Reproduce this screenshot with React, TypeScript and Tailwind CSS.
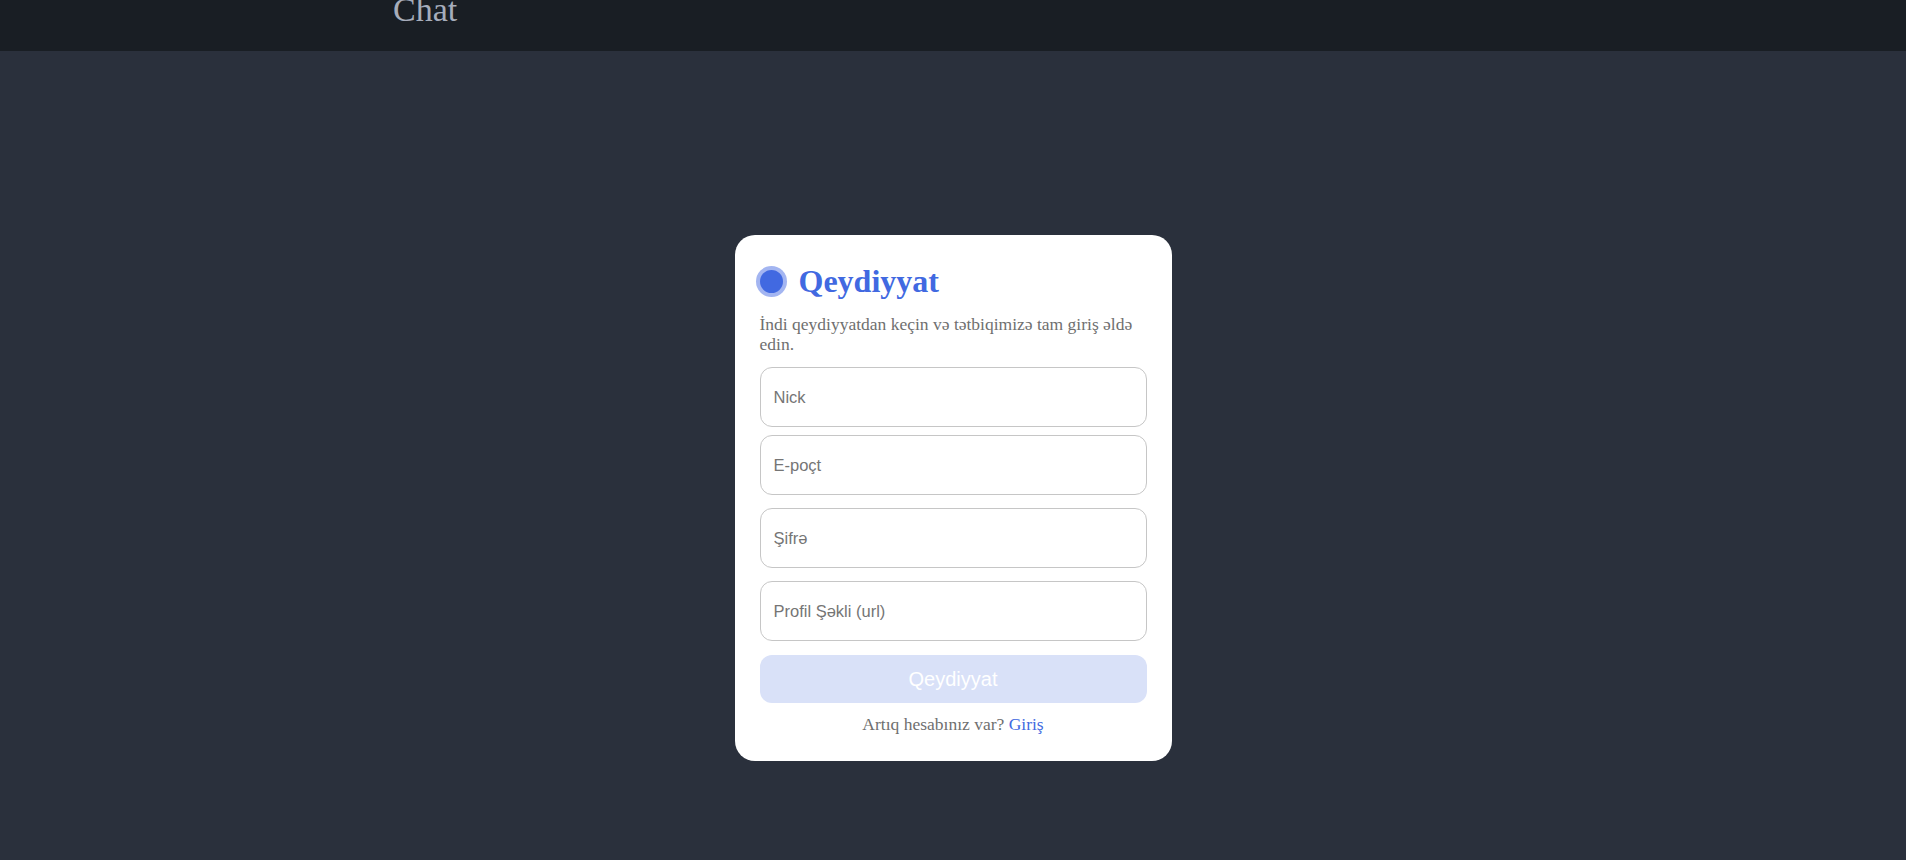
import React from "react";

const serif = "font-['Liberation_Serif','Times_New_Roman',serif]";
const sans = "font-['Liberation_Sans',Arial,sans-serif]";

const FIELDS = [
  { placeholder: "Nick", type: "text", gap: "mt-[13px]" },
  { placeholder: "E-poçt", type: "email", gap: "mt-2" },
  { placeholder: "Şifrə", type: "password", gap: "mt-[13px]" },
  { placeholder: "Profil Şəkli (url)", type: "text", gap: "mt-[13px]" }
];

export default function App() {
  return (
    <div className="min-h-screen bg-[#2a303c]">
      <header className="h-[51px] overflow-hidden bg-[#191e24]">
        <div className="mx-auto max-w-[1120px]">
          <h1 className={`${serif} mt-[-7px] text-[34px] font-normal leading-none text-[#a6adbb]`}>Chat</h1>
        </div>
      </header>

      <main className="flex justify-center pt-[184px]">
        <div className="w-[437px] rounded-[20px] bg-white px-[25px] pb-[24px] pt-[30px]">
          <div className="flex items-center gap-[16px]">
            <span className="h-[23px] w-[23px] rounded-full bg-[#4169e1] ring-4 ring-[#a3b5f1]" />
            <h2 className={`${serif} text-[32px] font-bold leading-none text-[#4169e1]`}>Qeydiyyat</h2>
          </div>

          <p className={`${serif} mt-[17px] text-[17.5px] leading-5 text-[#6f6f6f]`}>
            İndi qeydiyyatdan keçin və tətbiqimizə tam giriş əldə edin.
          </p>

          <form className="flex flex-col" onSubmit={(e) => e.preventDefault()}>
            {FIELDS.map((field) => (
              <input
                key={field.placeholder}
                type={field.type}
                placeholder={field.placeholder}
                className={`${sans} ${field.gap} h-[60px] w-full rounded-xl border border-[#c6c6c6] bg-white px-[13px] text-[16.5px] text-[#333] outline-none placeholder:text-[#757575]`}
              />
            ))}
            <button
              type="submit"
              disabled
              className={`${sans} mt-[14px] h-[48px] w-full rounded-xl bg-[#d9e1f8] text-[20px] text-white`}
            >
              Qeydiyyat
            </button>
          </form>

          <p className={`${serif} mt-[8px] text-center text-[17.5px] text-[#6f6f6f]`}>
            Artıq hesabınız var? <a href="#" className="text-[#4169e1]">Giriş</a>
          </p>
        </div>
      </main>
    </div>
  );
}
